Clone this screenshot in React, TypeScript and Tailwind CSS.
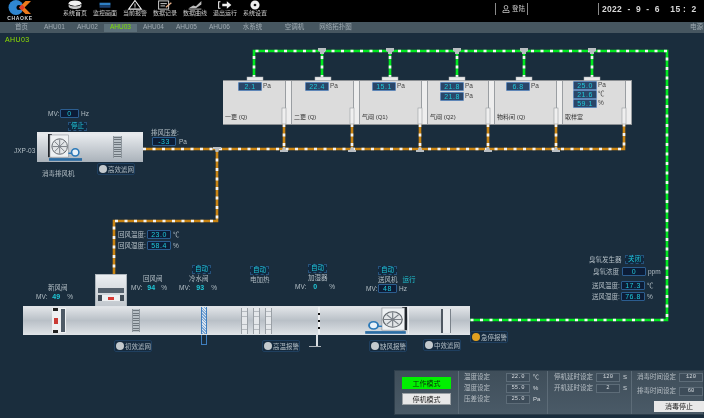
import type { ReactNode } from "react";
import { FaRegUser } from "react-icons/fa";

const cjk = "font-['Liberation_Sans','Noto_Sans_CJK_SC',sans-serif]";

const navItems = ["系统首页", "监控画面", "当前报警", "数据记录", "数据曲线", "退出运行", "系统设置"];
const tabs = ["首页", "AHU01", "AHU02", "AHU03", "AHU04", "AHU05", "AHU06", "水系统", "空调机", "网络拓扑图"];

const rooms = [
  { w: "w-[69px]", pad: "pl-[15px] pt-[1px]", name: "一更 (Q)", vals: [["2.1", "Pa"]] },
  { w: "w-[68px]", pad: "pl-[13px] pt-[1px]", name: "二更 (Q)", vals: [["22.4", "Pa"]] },
  { w: "w-[68px]", pad: "pl-[12px] pt-[1px]", name: "气闸 (Q1)", vals: [["15.1", "Pa"]] },
  { w: "w-[67px]", pad: "pl-[12px] pt-[1px] gap-[1px]", name: "气闸 (Q2)", vals: [["21.8", "Pa"], ["21.8", "Pa"]] },
  { w: "w-[68px]", pad: "pl-[11px] pt-[1px]", name: "物料间 (Q)", vals: [["6.8", "Pa"]] },
  { w: "w-[69px]", pad: "pl-[10px]", name: "取样室", vals: [["25.0", "Pa"], ["21.6", "℃"], ["59.1", "%"]] },
];
const brownDrops = [284, 352, 420, 488, 556];
const greenDrops = [322, 390, 457, 524, 592];
const caps = [255, 323, 390, 457, 524, 592];
const handles = [284, 352, 420, 488, 556, 624];

function At({ x, y, children, className = "" }: { x: number; y: number; children: ReactNode; className?: string }) {
  return (
    <div className={`absolute whitespace-nowrap leading-[9px] ${className}`} style={{ left: x, top: y }}>
      {children}
    </div>
  );
}

function Text({ children, className = "" }: { children: ReactNode; className?: string }) {
  return <span className={`text-[6.5px] leading-[9px] whitespace-nowrap text-[#b4bfc6] ${className}`}>{children}</span>;
}

function Num({ children, className = "" }: { children: ReactNode; className?: string }) {
  return <span className={`text-[7px] font-bold leading-[9px] text-[#1fc8d8] ${className}`}>{children}</span>;
}

function Val({ w = "w-[24px]", room = false, children }: { w?: string; room?: boolean; children: ReactNode }) {
  return (
    <div
      className={`flex h-[9px] shrink-0 items-center justify-center rounded-[1px] border text-[7px] leading-none tracking-[0.5px] text-[#1fc8d8] ${w} ${
        room ? "border-[#5f87b8] bg-[#2a4668]" : "border-[#2c5d8f] bg-[#0c1c36]"
      }`}
    >
      {children}
    </div>
  );
}

function Badge({ children }: { children: ReactNode }) {
  return (
    <div className="flex h-[9px] w-[19px] shrink-0 items-center justify-center border border-dashed border-[#26527c] bg-[#10283f] text-[6.5px] leading-none text-[#1fc8d8]">
      {children}
    </div>
  );
}

function Row({ children, className = "" }: { children: ReactNode; className?: string }) {
  return <div className={`flex h-[9px] items-center gap-[2px] ${className}`}>{children}</div>;
}

// two-line readout with a label, value and unit, used for return and supply air
function AirRow({ label, val, unit }: { label: string; val: string; unit: string }) {
  return (
    <Row>
      <Text className="w-[27px]">{label}</Text>
      <Val>{val}</Val>
      <Text>{unit}</Text>
    </Row>
  );
}

function Tag({ x, y, children, lamp = "bg-[#c3c9cd]" }: { x: number; y: number; children: ReactNode; lamp?: string }) {
  return (
    <At x={x} y={y} className="flex h-[12px] w-[38px] items-center gap-[1px] rounded-[2px] border border-[#1f3f5f] bg-[#152a3e] pl-[1px] text-[6.5px] text-[#b4bfc6]">
      <span className={`h-[8px] w-[8px] shrink-0 rounded-full ${lamp}`} />
      {children}
    </At>
  );
}

function Pipe({ d, color }: { d: string; color: string }) {
  return (
    <>
      <path d={d} fill="none" stroke={color} strokeWidth="2.6" />
      <path d={d} fill="none" stroke="#f4f4f4" strokeWidth="2.6" strokeDasharray="3 6.5" />
    </>
  );
}

function Fan({ className = "" }: { className?: string }) {
  return (
    <svg viewBox="0 0 36 28" preserveAspectRatio="none" className={className}>
      <rect x="0" y="0" width="4" height="24" fill="#20252b" />
      <rect x="2" y="1" width="19" height="23" fill="#eef1f3" stroke="#8b9096" strokeWidth="0.6" />
      <circle cx="12" cy="13" r="8" fill="#e3e6e8" stroke="#5f656b" strokeWidth="1" />
      <path d="M12 5.500v15M4.500 13h15M7 8l10 10M17 8L7 18" stroke="#7a8087" strokeWidth="1" />
      <circle cx="28" cy="19" r="3.800" fill="#e8f2fa" stroke="#2b79b8" strokeWidth="1.600" />
      <path d="M21 20h4" stroke="#2b79b8" strokeWidth="1.500" />
      <rect x="1" y="25" width="34" height="2.800" fill="#2b6ca3" />
    </svg>
  );
}

function FilterBars({ size }: { size: string }) {
  return (
    <div className={`flex shrink-0 flex-col justify-between border-x border-[#8d959c] bg-[#b9c1c7] py-[1px] ${size}`}>
      {Array.from({ length: 9 }).map((_, i) => (
        <span key={i} className="h-px bg-[#6f777e]" />
      ))}
    </div>
  );
}

function Heater({ className = "" }: { className?: string }) {
  return (
    <div className={`flex h-[26px] w-[7px] shrink-0 flex-col justify-around border-x border-[#9aa0a6] bg-[#e5e8eb] ${className}`}>
      <span className="h-[6px] border-y border-[#b6bbc0]" />
      <span className="h-[6px] border-y border-[#b6bbc0]" />
    </div>
  );
}

function Logo() {
  return (
    <div className="flex w-[36px] flex-col items-center">
      <svg width="24" height="15" viewBox="0 0 24 15">
        <circle cx="8" cy="7.500" r="7.500" fill="#2f86d0" />
        <circle cx="11" cy="7.500" r="2.500" fill="#000" />
        <path d="M11 7.500 17.500 1H23l-6.500 6.500L23 14h-5.500z" fill="#ee7a1c" />
        <path d="M11 7.500 14 4.600l3 2.900-3 2.900z" fill="#e43d2a" />
      </svg>
      <span className="text-[5px] font-bold leading-[6px] tracking-[0.6px] text-[#cfd3d6]">CHAOKE</span>
    </div>
  );
}

function NavIcon({ i }: { i: number }) {
  const icons = [
    <g key="0"><ellipse cx="8" cy="3.500" rx="7" ry="3" fill="#f1f1f1" /><path d="M1 4v3c0 1.600 3 3 7 3s7-1.400 7-3V4c0 1.600-3 3-7 3S1 5.600 1 4z" fill="#c8c8c8" /></g>,
    <g key="1"><rect x="2" y="3" width="12" height="3" fill="#2f7fc4" /><rect x="2" y="6" width="12" height="2.500" fill="#1a3f70" /></g>,
    <g key="2"><path d="M8 .5 15 10H1z" fill="none" stroke="#eee" strokeWidth="1.200" /><path d="M8 4v3.500M8 8.200v1" stroke="#eee" strokeWidth="1" /></g>,
    <g key="3"><rect x="1" y="1" width="11" height="9" fill="none" stroke="#ddd" /><path d="M3 4h7M3 6.500h5" stroke="#ddd" /><path d="m9 8 6-5" stroke="#e8b08a" strokeWidth="1.500" /></g>,
    <g key="4"><path d="M1 10h14" stroke="#ccc" /><path d="M1 9l5-3 3 1 6-6v4L9 9z" fill="#bbb" /></g>,
    <g key="5"><path d="M3 2H1v7h2" fill="none" stroke="#eee" strokeWidth="1.200" /><path d="M5 4h5V1.500L15 5.500 10 9.500V7H5z" fill="#eee" /></g>,
    <g key="6"><circle cx="8" cy="5.500" r="5" fill="#eee" /><circle cx="8" cy="5.500" r="1.500" fill="#111" /></g>,
  ];
  return (
    <svg width="16" height="10" viewBox="0 0 16 11">
      {icons[i]}
    </svg>
  );
}

function Setting({ label, val, unit }: { label: string; val: string; unit?: string }) {
  return (
    <div className="flex h-[10px] items-center">
      <span className="w-[42px] whitespace-nowrap text-[6.5px] leading-none text-[#b6bec4]">{label}</span>
      <span className="flex h-[9px] w-[24px] items-center justify-center border border-[#5d6c78] bg-[#3d4c59] font-['Liberation_Mono',monospace] text-[5.5px] leading-none text-[#d5dade]">
        {val}
      </span>
      {unit && <span className="ml-[3px] text-[6px] leading-none text-[#d5dade]">{unit}</span>}
    </div>
  );
}

function RoomBox({ room }: { room: (typeof rooms)[number] }) {
  return (
    <div className={`flex h-[45px] border-y border-[#8b8f93] bg-[#dcdcdc] ${room.w}`}>
      <div className="flex flex-1 flex-col justify-between pb-[3px]">
        <div className={`flex flex-col ${room.pad}`}>
          {room.vals.map(([v, u], i) => (
            <div key={i} className="flex h-[9px] items-center gap-[1px]">
              <Val room>{v}</Val>
              <span className="text-[6.5px] leading-none text-[#444]">{u}</span>
            </div>
          ))}
        </div>
        <span className="pl-[2px] text-[6px] leading-[7px] whitespace-nowrap text-[#333]">{room.name}</span>
      </div>
      <div className="w-[7px] shrink-0 border-x border-[#9a9ea2] bg-[#eeeeee]" />
    </div>
  );
}

export default function App() {
  return (
    <div className={`relative flex h-[418px] w-[704px] flex-col overflow-hidden bg-[#1a2d3d] blur-[0.3px] ${cjk}`}>
      {/* header */}
      <header className="relative flex h-[22px] shrink-0 items-start bg-black">
        <div className="ml-[2px]">
          <Logo />
        </div>
        <nav className="ml-[24px] flex w-[206px] justify-between">
          {navItems.map((n, i) => (
            <div key={n} className="flex w-[26px] flex-col items-center">
              <NavIcon i={i} />
              <span className="whitespace-nowrap text-[6px] leading-[7px] text-[#c9c9c9]">{n}</span>
            </div>
          ))}
        </nav>
        <div className="ml-[227px] mt-[3px] flex h-[12px] w-[33px] items-center gap-[2px] border-x border-[#8a8a8a] pl-[6px] text-[6.5px] leading-none text-[#c9c9c9]">
          <FaRegUser className="text-[8px]" />
          登陆
        </div>
        <div className="ml-[70px] mt-[3px] flex h-[12px] items-center border-l border-[#8a8a8a] pl-[3px] text-[8.5px] font-bold leading-none tracking-[0.3px] whitespace-pre text-[#d8d8d8]">
          2022  -  9  -  6    15 :  2
        </div>
      </header>

      {/* tab bar */}
      <div className="relative flex h-[11px] shrink-0 items-center bg-[#465660] pl-[5px] text-[6.5px] leading-none text-[#a2adb4]">
        {tabs.map((t, i) => (
          <div
            key={t}
            className={`flex h-[8px] w-[33px] items-center justify-center whitespace-nowrap ${i === 3 ? "bg-[#5c6f79] text-[#7be000]" : ""} ${i === 8 ? "ml-[9px]" : ""} ${i === 9 ? "ml-[8px]" : ""}`}
          >
            {t}
          </div>
        ))}
        <span className="ml-auto whitespace-nowrap pr-[1px]">电源</span>
      </div>

      {/* process diagram, children placed in page coordinates */}
      <div className="absolute left-0 top-0 h-[418px] w-[704px]">
        <At x={5} y={35} className="text-[7px] tracking-[0.4px] text-[#8fe000]">AHU03</At>

        <div className="absolute left-[223px] top-[80px] flex">
          {rooms.map((r) => (
            <RoomBox key={r.name} room={r} />
          ))}
        </div>

        {/* exhaust fan box */}
        <div className="absolute left-[37px] top-[132px] flex h-[30px] w-[106px] items-end border-t-2 border-[#e6e9ec] bg-gradient-to-b from-[#e9ecef] to-[#aab2ba] pb-[1px] pl-[11px]">
          <Fan className="h-[27px] w-[35px]" />
          <div className="mb-[3px] ml-[30px]">
            <FilterBars size="h-[22px] w-[9px]" />
          </div>
        </div>

        {/* return duct */}
        <div className="absolute left-[95px] top-[274px] h-[32px] w-[32px] border-x border-t border-[#aeb6bd] bg-gradient-to-b from-[#eceff2] to-[#c2c8ce]">
          <div className="mx-[2px] mt-[13px] h-[5px] bg-[#54606c]" />
          <div className="mx-[2px] mt-[2px] flex h-[6px] items-center justify-between bg-[#eef0f2]">
            <span className="h-[6px] w-[4px] bg-[#3f4a55]" />
            <span className="h-[3px] w-[6px] bg-[#d83a34]" />
            <span className="h-[6px] w-[4px] bg-[#3f4a55]" />
          </div>
        </div>

        {/* main AHU */}
        <div className="absolute left-[23px] top-[306px] flex h-[29px] w-[447px] items-center border-y border-[#dfe3e7] bg-gradient-to-b from-[#e2e5e8] via-[#b9c0c7] to-[#dde1e5]">
          <div className="ml-[29px] flex h-[25px] w-[14px] shrink-0 items-center justify-between bg-[#eef0f2] px-[1px]">
            <div className="flex h-full w-[5px] flex-col items-center justify-between">
              <span className="h-[3px] w-[5px] bg-[#222]" />
              <span className="h-[6px] w-[4px] bg-[#c93a34]" />
              <span className="h-[3px] w-[5px] bg-[#222]" />
            </div>
            <span className="h-[23px] w-[4px] bg-[#4e5a66]" />
          </div>
          <div className="ml-[66px]">
            <FilterBars size="h-[23px] w-[8px]" />
          </div>
          <div className="ml-[61px] h-[27px] w-[6px] shrink-0 border-x border-[#3f7fc0] bg-[repeating-linear-gradient(45deg,#7ea9d6_0_1px,#d9e3ee_1px_2px)]" />
          <Heater className="ml-[34px]" />
          <Heater className="ml-[5px]" />
          <Heater className="ml-[5px]" />
          <div className="ml-[46px] flex h-[27px] w-[2px] shrink-0 flex-col items-center gap-[5px] bg-[#eef0f2] pt-[6px]">
            <span className="h-[2px] w-[2px] bg-[#111]" />
            <span className="h-[2px] w-[2px] bg-[#111]" />
            <span className="h-[2px] w-[2px] bg-[#111]" />
          </div>
          <Fan className="ml-[44px] h-[27px] w-[43px] shrink-0 -scale-x-100" />
          <div className="ml-[1px] h-[27px] w-px shrink-0 bg-[#eef0f2]" />
          <div className="ml-[32px] h-[24px] w-[10px] shrink-0 border-l-2 border-r border-l-[#4f5862] border-r-[#7a828a] bg-[#e6e9ec]" />
        </div>
        {/* chilled water legs and humidifier stem */}
        <div className="absolute left-[201px] top-[335px] h-[10px] w-[6px] border-x border-b border-[#3f7fc0]" />
        <div className="absolute left-[316px] top-[335px] h-[11px] w-[2px] bg-[#d9dde1]" />
        <div className="absolute left-[309px] top-[346px] h-px w-[12px] bg-[#aeb4ba]" />

        {/* pipes */}
        <svg className="absolute left-0 top-0" width="704" height="418" viewBox="0 0 704 418">
          <Pipe d="M254 78V51H667V320H470" color="#00e820" />
          {greenDrops.map((x) => (
            <Pipe key={x} d={`M${x} 78V51`} color="#00e820" />
          ))}
          <Pipe d="M143 149H624V124" color="#c98412" />
          {brownDrops.map((x) => (
            <Pipe key={x} d={`M${x} 124V149`} color="#c98412" />
          ))}
          <Pipe d="M217 149V221H114V274" color="#c98412" />
          {greenDrops.map((x) => (
            <path key={x} d={`M${x - 4} 48h8v3l-2 1v2h-4v-2l-2-1z`} fill="#b9bec2" />
          ))}
          {caps.map((x) => (
            <rect key={x} x={x - 8} y="77" width="16" height="3.500" fill="#e8e8e8" stroke="#a8acb0" strokeWidth="0.5" />
          ))}
          {brownDrops.map((x) => (
            <path key={x} d={`M${x - 4} 152h8v-2h-2l-1-3h-2l-1 3h-2z`} fill="#b9bec2" />
          ))}
          <path d="M213 147h8v2h-2l-1 3h-2l-1-3h-2z" fill="#b9bec2" />
          {handles.map((x) => (
            <rect key={x} x={x - 2} y="108" width="4" height="16" fill="#efefef" stroke="#9a9ea2" strokeWidth="0.6" />
          ))}
        </svg>

        {/* exhaust fan */}
        <At x={48} y={109} className="flex flex-col gap-[4px]">
          <Row>
            <Text className="w-[10px]">MV:</Text>
            <Val w="w-[19px]">0</Val>
            <Text>Hz</Text>
          </Row>
          <div className="ml-[20px]">
            <Badge>停止</Badge>
          </div>
        </At>
        <At x={14} y={143}><Text>JXP-03</Text></At>
        <At x={42} y={166}><Text>消毒排风机</Text></At>
        <Tag x={97} y={163}>高效滤网</Tag>
        <At x={151} y={128} className="flex flex-col">
          <Text>排风压差:</Text>
          <Row className="gap-[3px] pl-[1px]">
            <Val>-33</Val>
            <Text>Pa</Text>
          </Row>
        </At>

        {/* return air */}
        <At x={118} y={230} className="flex flex-col gap-[2px]">
          <AirRow label="回风温度:" val="23.0" unit="℃" />
          <AirRow label="回风湿度:" val="58.4" unit="%" />
        </At>

        {/* valves and coils on the AHU */}
        <At x={36} y={283} className="flex flex-col">
          <Text className="pl-[12px]">新风阀</Text>
          <Row className="gap-[5px]">
            <Text>MV:</Text>
            <Num>49</Num>
            <Text className="ml-[2px]">%</Text>
          </Row>
        </At>
        <At x={131} y={274} className="flex flex-col">
          <Text className="pl-[12px]">回风阀</Text>
          <Row className="gap-[5px]">
            <Text>MV:</Text>
            <Num>94</Num>
            <Text className="ml-[1px]">%</Text>
          </Row>
        </At>
        <At x={179} y={265} className="flex flex-col">
          <div className="pl-[13px]"><Badge>自动</Badge></div>
          <Text className="pl-[10px]">冷水阀</Text>
          <Row className="gap-[6px]">
            <Text>MV:</Text>
            <Num>93</Num>
            <Text className="ml-[1px]">%</Text>
          </Row>
        </At>
        <At x={250} y={266} className="flex flex-col">
          <Badge>自动</Badge>
          <Text>电加热</Text>
        </At>
        <At x={295} y={264} className="flex flex-col">
          <div className="pl-[13px]"><Badge>自动</Badge></div>
          <Text className="pl-[13px]">加湿器</Text>
          <Row className="gap-[7px]">
            <Text>MV:</Text>
            <Num>0</Num>
            <Text className="ml-[5px]">%</Text>
          </Row>
        </At>
        <At x={366} y={266} className="flex flex-col">
          <div className="pl-[12px]"><Badge>自动</Badge></div>
          <Row className="gap-[5px] pl-[12px]">
            <Text>送风机</Text>
            <span className="text-[6.5px] leading-[9px] text-[#1fc8d8]">运行</span>
          </Row>
          <Row>
            <Text className="w-[10px]">MV:</Text>
            <Val w="w-[19px]">48</Val>
            <Text>Hz</Text>
          </Row>
        </At>

        <Tag x={114} y={340}>初效滤网</Tag>
        <Tag x={262} y={340}>高温报警</Tag>
        <Tag x={369} y={340}>缺风报警</Tag>
        <Tag x={423} y={339}>中效滤网</Tag>
        <Tag x={470} y={331} lamp="bg-[#e0a020]">急停报警</Tag>

        {/* ozone and supply air */}
        <At x={589} y={254} className="flex flex-col">
          <Row className="h-[10px]">
            <Text className="w-[34px]">臭氧发生器</Text>
            <Badge>关闭</Badge>
          </Row>
          <Row className="mt-[3px] pl-[4px]">
            <Text className="w-[27px]">臭氧浓度</Text>
            <Val>0</Val>
            <Text>ppm</Text>
          </Row>
          <div className="mt-[5px] flex flex-col gap-[2px] pl-[3px]">
            <AirRow label="送风温度:" val="17.3" unit="℃" />
            <AirRow label="送风湿度:" val="76.8" unit="%" />
          </div>
        </At>

        {/* setpoint panel */}
        <div className="absolute left-[394px] top-[370px] flex h-[45px] w-[310px] border border-[#2e3e4b] bg-gradient-to-b from-[#3f4e5a] to-[#4a5a67]">
          <div className="flex w-[63px] shrink-0 flex-col items-center gap-[4px] pt-[6px]">
            <button className="flex h-[12px] w-[49px] items-center justify-center bg-[#00f000] text-[7px] leading-none text-[#0a2a0a]">工作模式</button>
            <button className="flex h-[12px] w-[49px] items-center justify-center border border-[#9aa0a4] bg-[#e8e8e8] text-[7px] leading-none text-[#222]">停机模式</button>
          </div>
          <div className="flex w-[89px] shrink-0 flex-col gap-[1px] border-l border-[#5d6c78] pl-[5px] pt-[1px]">
            <Setting label="温度设定" val="22.0" unit="℃" />
            <Setting label="湿度设定" val="55.0" unit="%" />
            <Setting label="压差设定" val="25.0" unit="Pa" />
          </div>
          <div className="flex w-[84px] shrink-0 flex-col gap-[1px] border-l border-[#5d6c78] pl-[6px] pt-[1px]">
            <Setting label="停机延时设定" val="120" unit="S" />
            <Setting label="开机延时设定" val="2" unit="S" />
          </div>
          <div className="flex flex-1 flex-col border-l border-[#5d6c78] pl-[5px] pt-[1px]">
            <Setting label="消毒时间设定" val="120" />
            <div className="mt-[4px]">
              <Setting label="排毒时间设定" val="60" />
            </div>
            <button className="ml-[17px] mt-[5px] flex h-[11px] w-[50px] items-center justify-center bg-[#e8e8e8] text-[7px] leading-none text-[#222]">消毒停止</button>
          </div>
        </div>
      </div>
    </div>
  );
}
